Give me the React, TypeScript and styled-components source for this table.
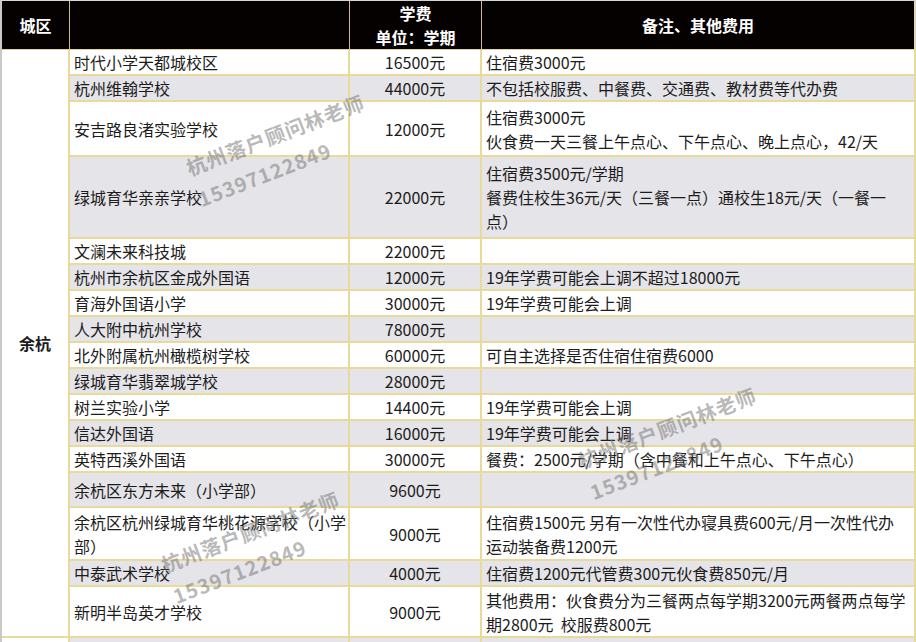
import React from "react";
import styled, {createGlobalStyle} from "styled-components";

type School = {
  name: string[]
  fee: string
  note: string[]
  h: number
}

const schools: School[] = [
  {name: ['时代小学天都城校区'], fee: '16500元', note: ['住宿费3000元'], h: 26},
  {name: ['杭州维翰学校'], fee: '44000元', note: ['不包括校服费、中餐费、交通费、教材费等代办费'], h: 26},
  {name: ['安吉路良渚实验学校'], fee: '12000元', note: ['住宿费3000元', '伙食费一天三餐上午点心、下午点心、晚上点心，42/天'], h: 55},
  {name: ['绿城育华亲亲学校'], fee: '22000元', note: ['住宿费3500元/学期', '餐费住校生36元/天（三餐一点）通校生18元/天（一餐一', '点）'], h: 82},
  {name: ['文澜未来科技城'], fee: '22000元', note: [], h: 26},
  {name: ['杭州市余杭区金成外国语'], fee: '12000元', note: ['19年学费可能会上调不超过18000元'], h: 26},
  {name: ['育海外国语小学'], fee: '30000元', note: ['19年学费可能会上调'], h: 26},
  {name: ['人大附中杭州学校'], fee: '78000元', note: [], h: 26},
  {name: ['北外附属杭州橄榄树学校'], fee: '60000元', note: ['可自主选择是否住宿住宿费6000'], h: 26},
  {name: ['绿城育华翡翠城学校'], fee: '28000元', note: [], h: 26},
  {name: ['树兰实验小学'], fee: '14400元', note: ['19年学费可能会上调'], h: 26},
  {name: ['信达外国语'], fee: '16000元', note: ['19年学费可能会上调'], h: 26},
  {name: ['英特西溪外国语'], fee: '30000元', note: ['餐费：2500元/学期（含中餐和上午点心、下午点心）'], h: 26},
  {name: ['余杭区东方未来（小学部）'], fee: '9600元', note: [], h: 35},
  {name: ['余杭区杭州绿城育华桃花源学校（小学', '部）'], fee: '9000元', note: ['住宿费1500元 另有一次性代办寝具费600元/月一次性代办', '运动装备费1200元'], h: 53},
  {name: ['中泰武术学校'], fee: '4000元', note: ['住宿费1200元代管费300元伙食费850元/月'], h: 26},
  {name: ['新明半岛英才学校'], fee: '9000元', note: ['其他费用：伙食费分为三餐两点每学期3200元两餐两点每学', '期2800元  校服费800元'], h: 51},
]

const marks = [
  {x: 179, y: 152},
  {x: 571, y: 445},
  {x: 154, y: 549},
]

const GlobalStyle = createGlobalStyle`
  html, body {
    margin: 0;
    padding: 0;
    background: #fff;
  }
  body {
    font-family: "Noto Sans CJK SC", "Noto Sans", sans-serif;
    color: #1c1c1c;
  }
`

const Table = styled.div<{ $rows: string }>`
  position: relative;
  display: grid;
  grid-template-columns: 68px 280px 132px 1fr;
  grid-template-rows: ${p => p.$rows};
  width: 916px;
  height: 642px;
  overflow: hidden;
  box-sizing: border-box;
  border-top: 1px solid #d6d6d6;
  border-left: 2px solid #c9c9c9;
`

const Head = styled.div<{ $last?: boolean }>`
  display: flex;
  flex-direction: column;
  align-items: center;
  justify-content: center;
  background: #060101;
  color: #fff;
  font-size: 16px;
  font-weight: 700;
  line-height: 24px;
  box-sizing: border-box;
  border-right: ${p => p.$last ? '2px solid #e0d6b0' : '1px solid #cdb89a'};
  border-bottom: 1px solid #e2d39a;
`

const City = styled.div`
  grid-column: 1;
  grid-row: 2 / 19;
  display: flex;
  align-items: center;
  justify-content: center;
  font-size: 16px;
  font-weight: 700;
  box-sizing: border-box;
  border-right: 2px solid #e8da9a;
  border-bottom: 2px solid #e8da9a;
  background: #fff;
`

const Cell = styled.div<{ $shade: boolean, $align: 'left' | 'center' }>`
  display: flex;
  flex-direction: column;
  justify-content: center;
  align-items: ${p => p.$align === 'center' ? 'center' : 'flex-start'};
  padding: 0 4px;
  background: ${p => p.$shade ? '#e5e4e8' : '#fff'};
  font-size: 16px;
  line-height: 24px;
  white-space: pre;
  box-sizing: border-box;
  border-right: 2px solid #e8da9a;
  border-bottom: 2px solid #e8da9a;
  overflow: hidden;
`

const Mark = styled.div`
  position: absolute;
  transform: rotate(-21deg);
  transform-origin: 0 0;
  color: rgba(115, 115, 115, 0.5);
  font-size: 20px;
  font-weight: 700;
  line-height: 33px;
  letter-spacing: 1px;
  white-space: nowrap;
  pointer-events: none;
`

const lines = (list: string[]) => list.map((l, i) => <div key={i}>{l}</div>)

export default function App() {
  const rowHeights = `49px ${schools.map(s => s.h + 'px').join(' ')} 30px`

  return (
    <>
      <GlobalStyle/>
      <Table $rows={rowHeights}>
        <Head>城区</Head>
        <Head/>
        <Head>
          <div>学费</div>
          <div>单位：学期</div>
        </Head>
        <Head $last>备注、其他费用</Head>

        <City>余杭</City>
        {schools.map((s, i) => (
          <React.Fragment key={i}>
            <Cell $shade={i % 2 === 1} $align="left" style={{gridColumn: 2}}>{lines(s.name)}</Cell>
            <Cell $shade={i % 2 === 1} $align="center" style={{gridColumn: 3}}>{s.fee}</Cell>
            <Cell $shade={i % 2 === 1} $align="left" style={{gridColumn: 4}}>{lines(s.note)}</Cell>
          </React.Fragment>
        ))}
        <Cell $shade={false} $align="left" style={{gridColumn: 1}}/>
        <Cell $shade $align="left"/>
        <Cell $shade $align="center"/>
        <Cell $shade $align="left"/>

        {marks.map((m, i) => (
          <Mark key={i} style={{left: m.x, top: m.y}}>
            <div>杭州落户顾问林老师</div>
            <div>15397122849</div>
          </Mark>
        ))}
      </Table>
    </>
  )
}
